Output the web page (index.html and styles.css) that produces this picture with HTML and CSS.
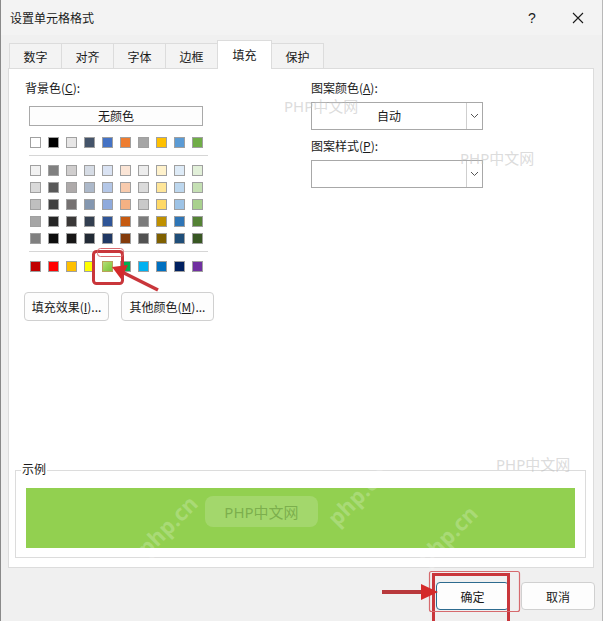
FILE: index.html
```html
<!DOCTYPE html>
<html lang="zh-CN">
<head>
<meta charset="utf-8">
<title>设置单元格格式</title>
<link rel="stylesheet" href="styles.css">
</head>
<body>
<div class="dialog">
  <div class="titlebar">
    <span class="title">设置单元格格式</span>
    <span class="tb-btn help">?</span>
    <span class="tb-btn close">
      <svg width="12" height="12" viewBox="0 0 12 12"><path d="M1 1 L11 11 M11 1 L1 11" stroke="#1a1a1a" stroke-width="1.1" fill="none"/></svg>
    </span>
  </div>

  <div class="tabs">
    <div class="tab">数字</div>
    <div class="tab">对齐</div>
    <div class="tab">字体</div>
    <div class="tab">边框</div>
    <div class="tab active">填充</div>
    <div class="tab">保护</div>
  </div>

  <div class="panel">
    <div class="top">
      <div class="left">
        <div class="label">背景色(<u>C</u>):</div>
        <div class="nocolor">无颜色</div>
        <div class="row theme">
          <span class="sw" style="background:#ffffff"></span>
          <span class="sw" style="background:#000000"></span>
          <span class="sw" style="background:#e7e6e6"></span>
          <span class="sw" style="background:#44546a"></span>
          <span class="sw" style="background:#4472c4"></span>
          <span class="sw" style="background:#ed7d31"></span>
          <span class="sw" style="background:#a5a5a5"></span>
          <span class="sw" style="background:#ffc000"></span>
          <span class="sw" style="background:#5b9bd5"></span>
          <span class="sw" style="background:#70ad47"></span>
        </div>
        <div class="sep"></div>
        <div class="tints">
          <div class="row">
            <span class="sw" style="background:#f2f2f2"></span>
            <span class="sw" style="background:#808080"></span>
            <span class="sw" style="background:#d0cece"></span>
            <span class="sw" style="background:#d6dce5"></span>
            <span class="sw" style="background:#dae3f3"></span>
            <span class="sw" style="background:#fbe5d6"></span>
            <span class="sw" style="background:#ededed"></span>
            <span class="sw" style="background:#fff2cc"></span>
            <span class="sw" style="background:#deebf7"></span>
            <span class="sw" style="background:#e2f0d9"></span>
          </div>
          <div class="row">
            <span class="sw" style="background:#d9d9d9"></span>
            <span class="sw" style="background:#595959"></span>
            <span class="sw" style="background:#aeaaaa"></span>
            <span class="sw" style="background:#adb9ca"></span>
            <span class="sw" style="background:#b4c7e7"></span>
            <span class="sw" style="background:#f8cbad"></span>
            <span class="sw" style="background:#dbdbdb"></span>
            <span class="sw" style="background:#ffe699"></span>
            <span class="sw" style="background:#bdd7ee"></span>
            <span class="sw" style="background:#c5e0b4"></span>
          </div>
          <div class="row">
            <span class="sw" style="background:#bfbfbf"></span>
            <span class="sw" style="background:#404040"></span>
            <span class="sw" style="background:#757171"></span>
            <span class="sw" style="background:#8497b0"></span>
            <span class="sw" style="background:#8faadc"></span>
            <span class="sw" style="background:#f4b183"></span>
            <span class="sw" style="background:#c9c9c9"></span>
            <span class="sw" style="background:#ffd966"></span>
            <span class="sw" style="background:#9dc3e6"></span>
            <span class="sw" style="background:#a9d18e"></span>
          </div>
          <div class="row">
            <span class="sw" style="background:#a6a6a6"></span>
            <span class="sw" style="background:#262626"></span>
            <span class="sw" style="background:#3a3838"></span>
            <span class="sw" style="background:#333f50"></span>
            <span class="sw" style="background:#2f5597"></span>
            <span class="sw" style="background:#c55a11"></span>
            <span class="sw" style="background:#7b7b7b"></span>
            <span class="sw" style="background:#bf9000"></span>
            <span class="sw" style="background:#2e75b6"></span>
            <span class="sw" style="background:#548235"></span>
          </div>
          <div class="row">
            <span class="sw" style="background:#808080"></span>
            <span class="sw" style="background:#0d0d0d"></span>
            <span class="sw" style="background:#171616"></span>
            <span class="sw" style="background:#222a35"></span>
            <span class="sw" style="background:#203864"></span>
            <span class="sw" style="background:#843c0c"></span>
            <span class="sw" style="background:#525252"></span>
            <span class="sw" style="background:#7f6000"></span>
            <span class="sw" style="background:#1f4e79"></span>
            <span class="sw" style="background:#385723"></span>
          </div>
        </div>
        <div class="sep"></div>
        <div class="row standard">
          <span class="sw" style="background:#c00000"></span>
          <span class="sw" style="background:#ff0000"></span>
          <span class="sw" style="background:#ffc000"></span>
          <span class="sw" style="background:#ffff00"></span>
          <span class="sw selected" style="background:#92d050"></span>
          <span class="sw" style="background:#00b050"></span>
          <span class="sw" style="background:#00b0f0"></span>
          <span class="sw" style="background:#0070c0"></span>
          <span class="sw" style="background:#002060"></span>
          <span class="sw" style="background:#7030a0"></span>
        </div>
        <div class="btns">
          <div class="btn fx">填充效果(<u>I</u>)...</div>
          <div class="btn more">其他颜色(<u>M</u>)...</div>
        </div>
      </div>

      <div class="right">
        <div class="label">图案颜色(<u>A</u>):</div>
        <div class="select">
          <span class="value">自动</span>
          <span class="arrow"><svg width="9" height="6" viewBox="0 0 9 6"><path d="M1 1 L4.5 4.5 L8 1" stroke="#555" stroke-width="1" fill="none"/></svg></span>
        </div>
        <div class="label second">图案样式(<u>P</u>):</div>
        <div class="select">
          <span class="value"></span>
          <span class="arrow"><svg width="9" height="6" viewBox="0 0 9 6"><path d="M1 1 L4.5 4.5 L8 1" stroke="#555" stroke-width="1" fill="none"/></svg></span>
        </div>
      </div>
    </div>

    <div class="sample">
      <div class="sample-label">示例</div>
      <div class="sample-fill"></div>
    </div>
  </div>

  <div class="footer">
    <div class="btn ok">确定</div>
    <div class="btn cancel">取消</div>
  </div>
</div>

<div class="wm wm1">PHP中文网</div>
<div class="wm wm2">PHP中文网</div>
<div class="wm wm3">PHP中文网</div>
<div class="wm-badge">PHP中文网</div>
<div class="wm-diag d1">php.cn</div>
<div class="wm-diag d2">php.cn</div>
<div class="wm-diag d3">php.cn</div>

<svg class="annot" width="603" height="621" viewBox="0 0 603 621">
  <rect x="93.5" y="251.5" width="29" height="32" rx="3" fill="none" stroke="#c9363b" stroke-width="3"/>
  <rect x="97.5" y="248.5" width="26" height="8" rx="3" fill="none" stroke="#d66a6e" stroke-width="1"/>
  <line x1="158" y1="290" x2="122" y2="272" stroke="#c9363b" stroke-width="3.5"/>
  <polygon points="112,267 128,265 121,279" fill="#d42a2a"/>
  <rect x="433.5" y="574.5" width="75" height="50" fill="none" stroke="#c9363b" stroke-width="3"/>
  <rect x="429.5" y="571.5" width="90" height="40" rx="2" fill="none" stroke="#d66a6e" stroke-width="1.2"/>
  <line x1="382" y1="592" x2="424" y2="592" stroke="#b8393c" stroke-width="4"/>
  <polygon points="438,592 421,584 421,600" fill="#d42a2a"/>
</svg>
</body>
</html>
```

FILE: styles.css
```css
* { box-sizing: border-box; }

html, body {
  margin: 0;
  padding: 0;
}

body {
  width: 603px;
  height: 621px;
  overflow: hidden;
  background: #f0f0f0;
  font-family: "Noto Sans CJK SC", "Microsoft YaHei", sans-serif;
  font-size: 12px;
  color: #1a1a1a;
  position: relative;
}

.dialog {
  width: 603px;
  height: 621px;
  background: #f0f0f0;
  border-left: 1px solid #8a8a8a;
  border-right: 1px solid #b8b8b8;
  display: flex;
  flex-direction: column;
}

.titlebar {
  height: 35px;
  display: flex;
  align-items: center;
  padding-left: 9px;
  background: #f3f3f3;
}

.title {
  flex: 1;
  font-size: 12px;
  line-height: 16px;
}

.tb-btn {
  width: 46px;
  height: 30px;
  display: flex;
  align-items: center;
  justify-content: center;
  font-size: 13px;
}

.help {
  font-family: "Liberation Sans", sans-serif;
  font-size: 14px;
}

.close {
  margin-right: 1px;
}

.tabs {
  height: 33px;
  display: flex;
  align-items: flex-end;
  padding-left: 8px;
}

.tab {
  width: 53px;
  height: 25px;
  display: flex;
  align-items: center;
  justify-content: center;
  background: #f3f3f3;
  border: 1px solid #dcdcdc;
  border-bottom: none;
  margin-right: -1px;
  font-size: 12px;
}

.tab.active {
  height: 29px;
  background: #ffffff;
  width: 55px;
  position: relative;
  z-index: 2;
  margin-bottom: -1px;
  padding-bottom: 1px;
}

.panel {
  height: 500px;
  margin-left: 7px;
  margin-right: 8px;
  background: #ffffff;
  border: 1px solid #dcdcdc;
  display: flex;
  flex-direction: column;
  justify-content: space-between;
}

.top {
  display: flex;
  padding-top: 11px;
  padding-left: 16px;
}

.left {
  width: 200px;
}

.right {
  margin-left: 86px;
  width: 172px;
}

.label {
  height: 16px;
  line-height: 16px;
  font-size: 12px;
}

.label u { text-decoration: underline; }

.nocolor {
  margin-top: 10px;
  margin-left: 4px;
  width: 174px;
  height: 20px;
  border: 1px solid #a9a9a9;
  background: #fdfdfd;
  text-align: center;
  line-height: 18px;
}

.row {
  display: flex;
  gap: 7px;
  margin-left: 5px;
  height: 11px;
}

.sw {
  width: 11px;
  height: 11px;
  border: 1px solid #a0a0a0;
  flex: none;
}

.theme {
  margin-top: 11px;
}

.sep {
  margin-left: 4px;
  width: 179px;
  height: 1px;
  background: #d6d6d6;
  margin-top: 7px;
}

.tints {
  margin-top: 9px;
  display: flex;
  flex-direction: column;
  gap: 6px;
}

.tints .row { height: 11px; }

.tints + .sep { margin-top: 7px; }

.standard {
  margin-top: 9px;
  align-items: center;
}

.sw.selected {
  background: linear-gradient(135deg, #b6dd7a 0%, #92d050 55%, #7fbd45 100%) !important;
  border-color: #b9a25a;
}

.btns {
  display: flex;
  margin-top: 20px;
  margin-left: -1px;
  gap: 12px;
}

.btn {
  height: 29px;
  border: 1px solid #d0d0d0;
  border-radius: 4px;
  background: #fdfdfd;
  display: flex;
  align-items: center;
  justify-content: center;
  font-size: 12px;
}

.btn.fx { width: 85px; }
.btn.more { width: 93px; }

.select {
  margin-top: 6px;
  width: 172px;
  height: 28px;
  border: 1px solid #a8a8a8;
  display: flex;
}

.select .value {
  flex: 1;
  text-align: center;
  line-height: 26px;
}

.select .arrow {
  width: 16px;
  border-left: 1px solid #cfcfcf;
  display: flex;
  align-items: center;
  justify-content: center;
}

.label.second {
  margin-top: 8px;
}

.sample {
  margin: 0 7px 9px 6px;
  border: 1px solid #dcdcdc;
  height: 88px;
  position: relative;
  padding: 17px 10px 9px 10px;
}

.sample-label {
  position: absolute;
  left: 5px;
  top: -10px;
  background: #ffffff;
  padding: 0 1px;
  line-height: 16px;
}

.sample-fill {
  height: 60px;
  background: #92d050;
}

.footer {
  flex: 1;
  display: flex;
  justify-content: flex-end;
  align-items: flex-start;
  padding-top: 14px;
  padding-right: 7px;
  gap: 12px;
}

.btn.ok {
  width: 73px;
  height: 28px;
  border: 1px solid #2d6b8f;
  background: #fdfdfd;
}

.btn.cancel {
  width: 74px;
  height: 28px;
}

/* watermark overlays */
.wm {
  position: absolute;
  font-family: "Noto Sans", "Noto Sans CJK SC", sans-serif;
  font-size: 15px;
  line-height: 15px;
  color: rgba(190, 190, 190, 0.55);
  white-space: nowrap;
  pointer-events: none;
}
.wm1 { left: 284px; top: 99px; }
.wm2 { left: 460px; top: 151px; }
.wm3 { left: 496px; top: 457px; }

.wm-badge {
  position: absolute;
  left: 205px;
  top: 496px;
  width: 113px;
  height: 31px;
  border-radius: 8px;
  background: rgba(255, 255, 255, 0.16);
  color: rgba(90, 140, 50, 0.55);
  font-family: "Noto Sans", "Noto Sans CJK SC", sans-serif;
  font-size: 15px;
  display: flex;
  align-items: center;
  justify-content: center;
}

.wm-diag {
  position: absolute;
  font-family: "Noto Sans", sans-serif;
  font-size: 22px;
  font-weight: bold;
  color: rgba(255, 255, 255, 0.22);
  transform: rotate(-45deg);
  white-space: nowrap;
  pointer-events: none;
}
.d1 { left: 130px; top: 510px; }
.d2 { left: 320px; top: 480px; }
.d3 { left: 410px; top: 520px; }

.annot {
  position: absolute;
  left: 0;
  top: 0;
  pointer-events: none;
}
```
